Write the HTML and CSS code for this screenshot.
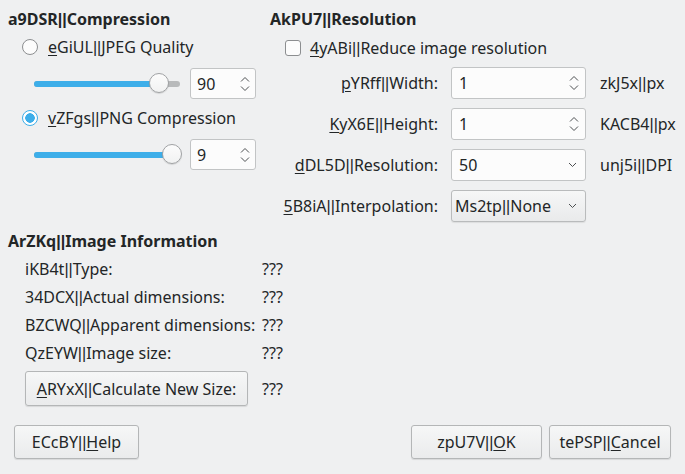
FILE: index.html
```html
<!DOCTYPE html>
<html>
<head>
<meta charset="utf-8">
<link rel="stylesheet" href="styles.css">
</head>
<body>
<div class="dialog">
  <div class="top">
    <section class="col left">
      <h2 class="title">a9DSR<span class="p">||</span>Compression</h2>
      <div class="radio-row"><span class="radio"></span><span class="lbl"><u>e</u>GiUL<span class="p">||</span>JPEG Quality</span></div>
      <div class="slider-row">
        <div class="slider">
          <div class="groove"></div>
          <div class="fill" style="width:125px"></div>
          <div class="handle" style="left:115px"></div>
        </div>
        <div class="spin"><span class="val">90</span>
          <svg class="updown" width="10" height="16" viewBox="0 0 10 16"><path d="M1 5.5 L5 1.5 L9 5.5 M1 10.5 L5 14.5 L9 10.5" fill="none" stroke="#4d5052" stroke-width="1"/></svg>
        </div>
      </div>
      <div class="radio-row"><span class="radio checked"></span><span class="lbl"><u>v</u>ZFgs<span class="p">||</span>PNG Compression</span></div>
      <div class="slider-row">
        <div class="slider">
          <div class="groove"></div>
          <div class="fill" style="width:138px"></div>
          <div class="handle" style="left:128px"></div>
        </div>
        <div class="spin"><span class="val">9</span>
          <svg class="updown" width="10" height="16" viewBox="0 0 10 16"><path d="M1 5.5 L5 1.5 L9 5.5 M1 10.5 L5 14.5 L9 10.5" fill="none" stroke="#4d5052" stroke-width="1"/></svg>
        </div>
      </div>
    </section>
    <section class="col right">
      <h2 class="title">AkPU7<span class="p">||</span>Resolution</h2>
      <div class="check-row"><span class="checkbox"></span><span class="lbl"><u>4</u>yABi<span class="p">||</span>Reduce image resolution</span></div>
      <div class="form">
        <span class="flabel"><u>p</u>YRff<span class="p">||</span>Width:</span>
        <div class="field"><span class="val">1</span>
          <svg class="updown" width="10" height="16" viewBox="0 0 10 16"><path d="M1 5.5 L5 1.5 L9 5.5 M1 10.5 L5 14.5 L9 10.5" fill="none" stroke="#4d5052" stroke-width="1"/></svg>
        </div>
        <span class="unit">zkJ5x<span class="p">||</span>px</span>

        <span class="flabel"><u>K</u>yX6E<span class="p">||</span>Height:</span>
        <div class="field"><span class="val">1</span>
          <svg class="updown" width="10" height="16" viewBox="0 0 10 16"><path d="M1 5.5 L5 1.5 L9 5.5 M1 10.5 L5 14.5 L9 10.5" fill="none" stroke="#4d5052" stroke-width="1"/></svg>
        </div>
        <span class="unit">KACB4<span class="p">||</span>px</span>

        <span class="flabel"><u>d</u>DL5D<span class="p">||</span>Resolution:</span>
        <div class="field"><span class="val">50</span>
          <svg class="down" width="9" height="6" viewBox="0 0 9 6"><path d="M1 1 L4.5 4.5 L8 1" fill="none" stroke="#4d5052" stroke-width="1"/></svg>
        </div>
        <span class="unit">unj5i<span class="p">||</span>DPI</span>

        <span class="flabel"><u>5</u>B8iA<span class="p">||</span>Interpolation:</span>
        <div class="field combo"><span class="val">Ms2tp<span class="p">||</span>None</span>
          <svg class="down" width="9" height="6" viewBox="0 0 9 6"><path d="M1 1 L4.5 4.5 L8 1" fill="none" stroke="#4d5052" stroke-width="1"/></svg>
        </div>
        <span class="unit"></span>
      </div>
    </section>
  </div>

  <section class="info">
    <h2 class="title">ArZKq<span class="p">||</span>Image Information</h2>
    <div class="info-grid">
      <span class="ilabel">iKB4t<span class="p">||</span>Type:</span><span class="ival">???</span>
      <span class="ilabel">34DCX<span class="p">||</span>Actual dimensions:</span><span class="ival">???</span>
      <span class="ilabel">BZCWQ<span class="p">||</span>Apparent dimensions:</span><span class="ival">???</span>
      <span class="ilabel">QzEYW<span class="p">||</span>Image size:</span><span class="ival">???</span>
      <div class="bcell"><button class="btn calc"><u>A</u>RYxX<span class="p">||</span>Calculate New Size:</button></div><span class="ival">???</span>
    </div>
  </section>

  <div class="buttons">
    <button class="btn help">ECcBY<span class="p">||</span><u>H</u>elp</button>
    <div class="spacer"></div>
    <button class="btn ok">zpU7V<span class="p">||</span><u>O</u>K</button>
    <button class="btn cancel">tePSP<span class="p">||</span><u>C</u>ancel</button>
  </div>
</div>
</body>
</html>
```

FILE: styles.css
```css
html, body {
  margin: 0;
  padding: 0;
  background: #eff0f1;
}
body {
  font-family: "Noto Sans", "DejaVu Sans", sans-serif;
  font-size: 16px;
  color: #232627;
  width: 685px;
  height: 474px;
  overflow: hidden;
}
u {
  text-decoration: underline;
  text-underline-offset: 2px;
  text-decoration-thickness: 1px;
}
.p {
  font-family: "Liberation Sans", sans-serif;
}
.dialog {
  padding-top: 10px;
}
.top {
  display: flex;
}
.col.left {
  width: 262px;
}
.title {
  margin: 0;
  font-size: 16px;
  font-weight: bold;
  height: 18px;
  line-height: 18px;
  white-space: nowrap;
}
.left .title,
.info .title {
  padding-left: 8px;
}
.radio-row {
  display: flex;
  align-items: center;
  height: 22px;
  margin-top: 8px;
  padding-left: 22px;
}
.radio {
  width: 16px;
  height: 16px;
  box-sizing: border-box;
  border: 1px solid #8c8e90;
  border-radius: 50%;
  background: #fcfcfc;
  margin-right: 10px;
}
.radio.checked {
  border-color: #3daee9;
  background: radial-gradient(circle, #3daee9 0 4.5px, #ffffff 5px);
}
.lbl {
  line-height: 22px;
  white-space: nowrap;
}
.slider-row {
  display: flex;
  align-items: center;
  height: 31px;
  margin-top: 10px;
  padding-left: 34px;
}
.slider {
  position: relative;
  width: 146px;
  height: 22px;
  margin-right: 10px;
}
.groove {
  position: absolute;
  left: 0;
  right: 0;
  top: 8px;
  height: 6px;
  border-radius: 3px;
  background: #b8babb;
}
.fill {
  position: absolute;
  left: 0;
  top: 8px;
  height: 6px;
  border-radius: 3px;
  background: #3daee9;
}
.handle {
  position: absolute;
  top: 0;
  width: 20px;
  height: 20px;
  box-sizing: border-box;
  border-radius: 50%;
  border: 1px solid #a0a2a4;
  background: linear-gradient(#fcfcfc, #f1f2f2);
  box-shadow: 0 1px 1px rgba(0,0,0,0.12);
}
.spin, .field {
  display: flex;
  align-items: center;
  box-sizing: border-box;
  height: 31px;
  background: #fcfcfc;
  border: 1px solid #c2c4c5;
  border-radius: 3px;
}
.spin {
  width: 66px;
  padding-left: 6px;
  padding-right: 5px;
}
.val {
  flex: 1;
  white-space: nowrap;
}
.updown {
  display: block;
}
.col.right {
  flex: 1;
  padding-left: 8px;
}
.check-row {
  display: flex;
  align-items: center;
  height: 22px;
  margin-top: 9px;
  padding-left: 15px;
}
.checkbox {
  width: 16px;
  height: 16px;
  box-sizing: border-box;
  border: 1px solid #8c8e90;
  border-radius: 3px;
  background: #fcfcfc;
  margin-right: 9px;
}
.form {
  display: grid;
  grid-template-columns: 168px 135px auto;
  grid-auto-rows: 32px;
  column-gap: 13px;
  row-gap: 9px;
  margin-top: 8px;
  align-items: center;
}
.flabel {
  text-align: right;
  white-space: nowrap;
}
.field {
  height: 32px;
  padding-left: 7px;
  padding-right: 6px;
}
.field .down {
  margin-right: 2px;
}
.field.combo {
  background: linear-gradient(#f6f7f7, #e9eaeb);
  border-color: #b9bbbc;
  box-shadow: 0 1px 1px rgba(0,0,0,0.08);
  padding-left: 3px;
}
.unit {
  padding-left: 1px;
  white-space: nowrap;
}
.info {
  margin-top: 10px;
}
.info-grid {
  display: grid;
  grid-template-columns: 237px auto;
  grid-template-rows: 28px 28px 28px 28px 39px;
  margin-top: 5px;
  padding-left: 25px;
  align-items: center;
}
.info-grid .bcell, .info-grid .bcell + .ival {
  margin-top: 4px;
  height: 35px;
  display: flex;
  align-items: center;
}
.ilabel, .ival {
  white-space: nowrap;
}
.btn {
  font-family: inherit;
  font-size: 16px;
  color: #232627;
  background: linear-gradient(#f6f7f7, #eaebec);
  border: 1px solid #b4b6b7;
  border-radius: 3px;
  box-shadow: 0 1px 1px rgba(0,0,0,0.1);
  padding: 0;
  box-sizing: border-box;
  white-space: nowrap;
}
.calc {
  width: 223px;
  height: 35px;
}
.buttons {
  display: flex;
  margin-top: 19px;
  padding: 0 14px;
  gap: 7px;
}
.spacer {
  flex: 1;
}
.help, .ok, .cancel {
  height: 34px;
}
.help { width: 125px; }
.ok { width: 131px; }
.cancel { width: 122px; }
```
